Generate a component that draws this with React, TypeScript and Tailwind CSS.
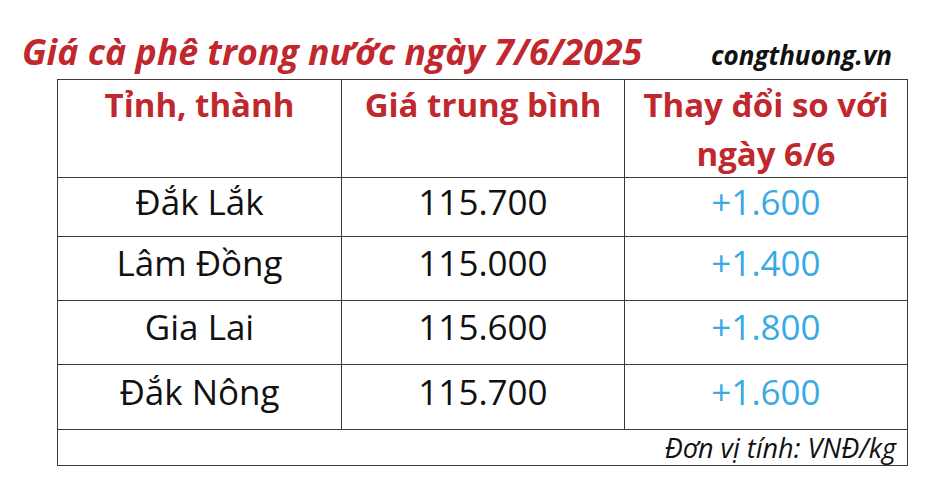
import React from "react";

const RED = "text-[#c0282d]";

const rows = [
  ["Đắk Lắk", "115.700", "+1.600", "h-[59px]"],
  ["Lâm Đồng", "115.000", "+1.400", "h-[64px]"],
  ["Gia Lai", "115.600", "+1.800", "h-[64px]"],
  ["Đắk Nông", "115.700", "+1.600", "h-[65px]"],
];

export default function App() {
  return (
    <div
      className="w-[933px] h-[488px] bg-white pt-[31px]"
      style={{ fontFamily: '"Open Sans", "Noto Sans", sans-serif' }}
    >
      <div className="flex items-baseline justify-between pl-[22px] pr-[41px] h-[42px] leading-[40px]">
        <span className={`text-[35.7px] font-bold italic ${RED}`}>
          Giá cà phê trong nước ngày 7/6/2025
        </span>
        <span className="text-[26px] font-bold italic text-[#111]">congthuong.vn</span>
      </div>
      <div className="ml-[57px] mt-[6px] w-[851px] border-t border-l border-[#3a3a3a] grid grid-cols-[284px_283px_283px]">
        <div className={`h-[98px] border-r border-b border-[#3a3a3a] text-center text-[33px] font-bold leading-[49px] ${RED}`}>
          Tỉnh, thành
        </div>
        <div className={`h-[98px] border-r border-b border-[#3a3a3a] text-center text-[33px] font-bold leading-[49px] ${RED}`}>
          Giá trung bình
        </div>
        <div className={`h-[98px] border-r border-b border-[#3a3a3a] text-center text-[33px] font-bold leading-[49px] ${RED}`}>
          Thay đổi so với
          <br />
          ngày 6/6
        </div>
        {rows.map((r) => (
          <React.Fragment key={r[0]}>
            <div className={`${r[3]} border-r border-b border-[#3a3a3a] flex items-center justify-center pb-[10px] text-[35px] text-[#111]`}>
              {r[0]}
            </div>
            <div className={`${r[3]} border-r border-b border-[#3a3a3a] flex items-center justify-center pb-[10px] text-[35px] text-[#111]`}>
              {r[1]}
            </div>
            <div className={`${r[3]} border-r border-b border-[#3a3a3a] flex items-center justify-center pb-[10px] text-[35px] text-[#3aa9e4]`}>
              {r[2]}
            </div>
          </React.Fragment>
        ))}
        <div className="col-span-3 h-[36px] border-r border-b border-[#3a3a3a] flex items-center justify-end pr-[11px] text-[27px] italic text-[#111] leading-[36px]">
          Đơn vị tính: VNĐ/kg
        </div>
      </div>
    </div>
  );
}
